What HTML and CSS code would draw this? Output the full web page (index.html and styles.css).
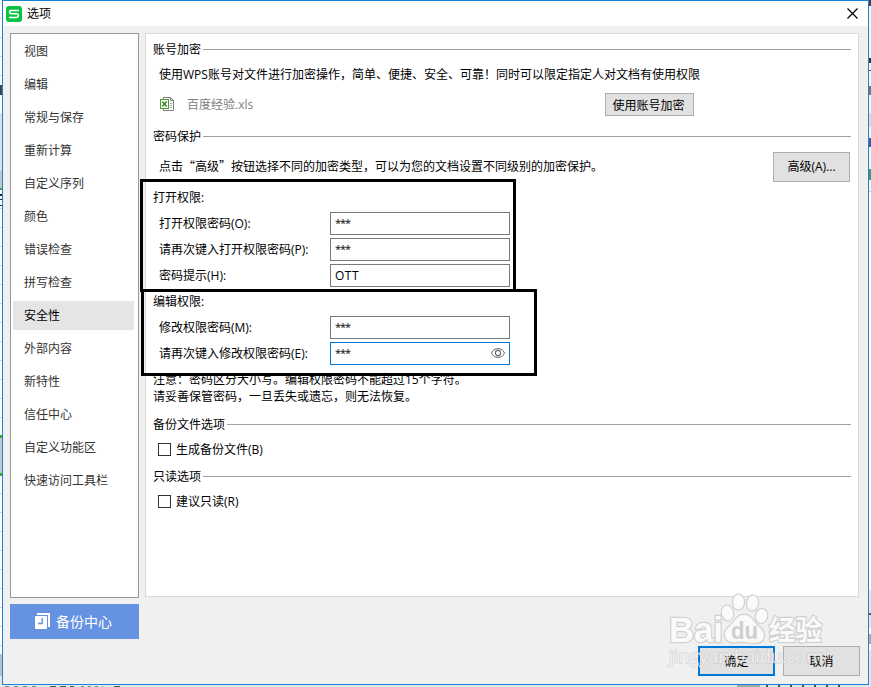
FILE: index.html
```
<!DOCTYPE html>
<html lang="zh-CN">
<head>
    <meta charset="UTF-8">
    <meta name="viewport" content="width=device-width, initial-scale=1.0">
    <title>选项</title>

    <link rel="stylesheet" href="styles.css">

</head>
<body>

    <!-- spreadsheet behind the dialog -->
    <div class="sheet-left"></div>
    <div class="sheet-right"></div>
    <div class="status-bar"></div>

    <div class="dialog">

        <div class="title-bar">
            <svg class="logo" width="16" height="16" viewBox="0 0 16 16">
                <rect width="16" height="16" rx="3" fill="#0cc243"/>
                <path d="M13 4.5H5.2Q3.5 4.5 3.5 6T5.2 7.7H10.8Q12.5 7.9 12.5 9.5T10.8 11.5H3" fill="none" stroke="#fff" stroke-width="1.5"/>
            </svg>
            <span class="title-text">选项</span>
            <svg class="close" width="11" height="11" viewBox="0 0 11 11">
                <path d="M.5 .5L10.5 10.5M10.5 .5L.5 10.5" stroke="#000" stroke-width="1.2"/>
            </svg>
        </div>

        <div class="main">

            <div class="left-col">
                <ul class="menu">
                    <li>视图</li>
                    <li>编辑</li>
                    <li>常规与保存</li>
                    <li>重新计算</li>
                    <li>自定义序列</li>
                    <li>颜色</li>
                    <li>错误检查</li>
                    <li>拼写检查</li>
                    <li class="active">安全性</li>
                    <li>外部内容</li>
                    <li>新特性</li>
                    <li>信任中心</li>
                    <li>自定义功能区</li>
                    <li>快速访问工具栏</li>
                </ul>
                <div class="backup">
                    <svg width="16" height="16" viewBox="0 0 16 16">
                        <path d="M2 0H15V14H13V2H2Z" fill="#fff"/>
                        <rect x="0" y="3" width="12" height="13" rx="1" fill="#fff"/>
                        <path d="M7.2 5V10.4H3" fill="none" stroke="#6593e1" stroke-width="1.5"/>
                    </svg>
                    <span>备份中心</span>
                </div>
            </div>

            <div class="panel">

                <div class="legend">账号加密</div>
                <div class="text-row">使用WPS账号对文件进行加密操作，简单、便捷、安全、可靠！同时可以限定指定人对文档有使用权限</div>
                <div class="file-row">
                    <svg width="15" height="15" viewBox="0 0 15 15">
                        <path d="M3.5 2V.5H10.5L13.5 3.5V13.5H3.5V12" fill="#fff" stroke="#808080"/>
                        <path d="M10.5 .5V3.5H13.5" fill="none" stroke="#808080"/>
                        <path d="M10 6.5H12M10 8.5H12M10 10.5H12" stroke="#aaa"/>
                        <rect x=".5" y="2.5" width="8" height="9" fill="#fff" stroke="#4e9a2f"/>
                        <path d="M2.3 4.5L6.7 9.5M6.7 4.5L2.3 9.5" stroke="#3f8a20" stroke-width="1.6"/>
                    </svg>
                    <span class="file-name">百度经验.xls</span>
                    <button class="btn btn-account">使用账号加密</button>
                </div>

                <div class="legend legend-tall">密码保护</div>
                <div class="advanced-row">
                    <span class="cjk-quotes">点击“高级”按钮选择不同的加密类型，可以为您的文档设置不同级别的加密保护。</span>
                    <button class="btn btn-large">高级(A)...</button>
                </div>

                <div class="group-title first-group">打开权限:</div>
                <div class="field"><label>打开权限密码(O):</label><div class="input stars">***</div></div>
                <div class="field"><label>请再次键入打开权限密码(P):</label><div class="input stars">***</div></div>
                <div class="field"><label>密码提示(H):</label><div class="input hint">OTT</div></div>

                <div class="group-title">编辑权限:</div>
                <div class="field"><label>修改权限密码(M):</label><div class="input stars">***</div></div>
                <div class="field">
                    <label>请再次键入修改权限密码(E):</label>
                    <div class="input stars focused">***
                        <svg class="eye" width="14" height="10" viewBox="0 0 14 10">
                            <path d="M.5 5Q2.5 .6 7 .6T13.5 5Q11.5 9.4 7 9.4T.5 5Z" fill="none" stroke="#666"/>
                            <circle cx="7" cy="5" r="2.6" fill="none" stroke="#666" stroke-width="1.1"/>
                        </svg>
                    </div>
                </div>

                <div class="note">注意：密码区分大小写。编辑权限密码不能超过15个字符。<br>请妥善保管密码，一旦丢失或遗忘，则无法恢复。</div>

                <div class="legend">备份文件选项</div>
                <div class="check"><span class="box"></span>生成备份文件(B)</div>
                <div class="legend">只读选项</div>
                <div class="check"><span class="box"></span>建议只读(R)</div>

            </div>

        </div>

        <div class="footer">
            <button class="btn btn-large btn-default">确定</button>
            <button class="btn btn-large">取消</button>
        </div>

    </div>

    <!-- annotation frames over the two password groups -->
    <div class="frame frame-open"></div>
    <div class="frame frame-edit"></div>

    <svg class="watermark" width="171" height="88" viewBox="0 0 171 88">
        <g class="mark">
            <text x="8" y="52" class="mark-latin" textLength="54" lengthAdjust="spacingAndGlyphs">Bai</text>
            <ellipse cx="66.5" cy="23" rx="5.5" ry="7.5" transform="rotate(-12 66.5 23)"/>
            <ellipse cx="77.5" cy="12" rx="5.5" ry="7.5"/>
            <ellipse cx="91.5" cy="13" rx="5.5" ry="7.5" transform="rotate(8 91.5 13)"/>
            <ellipse cx="100.5" cy="26" rx="5.5" ry="7" transform="rotate(12 100.5 26)"/>
            <path d="M83 25C91 25 92 32 98 37C106 43 104 53 94 53C88 53 83 51 77 52C65 55 60 44 67 38C74 32 75 25 83 25Z"/>
            <text x="108" y="50" class="mark-cjk" textLength="53" lengthAdjust="spacingAndGlyphs">经验</text>
        </g>
        <text x="70" y="49" class="mark-du" textLength="27" lengthAdjust="spacingAndGlyphs">du</text>
        <text x="8" y="73" class="mark-url" textLength="154" lengthAdjust="spacingAndGlyphs">jingyan.baidu.com</text>
    </svg>

</body>
</html>
```

FILE: styles.css
```
body{
    margin: 0;
    width: 871px;
    height: 687px;
    position: relative;
    overflow: hidden;
    background-color: #fff;
    font-family: "Open Sans", "Noto Sans CJK SC", sans-serif;
    font-size: 12px;
    color: #000;
}

/* background sheet */

.sheet-left{
    position: absolute;
    left: 0;
    top: 0;
    width: 2px;
    height: 687px;
    background:
        linear-gradient(transparent 0 85px, #444 85px 95px, transparent 95px 113px, #e1e1e1 113px 171px, #c6c6c6 171px 188px, #3fa63f 188px 190px, #fff 190px 194px, #222 194px 196px, #fff 196px 199px, #222 199px 200px, #fff 200px 205px, #222 205px 206px, transparent 206px 435px, #3fa63f 435px 438px, #c8c8c8 438px 473px, #3fa63f 473px 476px, transparent 476px 654px, #bfbfbf 654px 676px, #e6e6e6 676px),
        repeating-linear-gradient(#fff 0 18px, #d4d4d4 18px 19px);
}

.sheet-right{
    position: absolute;
    left: 869px;
    top: 0;
    width: 2px;
    height: 687px;
    background: linear-gradient(#3b4252 0 6px, #f5f6f7 6px 58px, #333 58px 63px, #fff 63px 70px, #555 70px 71px, #f5f6f7 71px 86px, #777 86px 95px, #f5f6f7 95px 113px, #ddd 113px 127px, #f5f6f7 127px 138px, #3f5f95 138px 147px, #f5f6f7 147px 169px, #3c9a72 169px 180px, #f5f6f7 180px 191px, #ccc 191px 192px, #fff 192px 590px, #e6e6e6 590px 613px, #555 613px 615px, #e6e6e6 615px 628px, #fff 628px 634px, #aaa 634px 644px, #fff 644px 650px, #e6e6e6 650px);
}

.status-bar{
    position: absolute;
    left: 0;
    top: 685px;
    width: 871px;
    height: 2px;
    background:
        repeating-linear-gradient(90deg, #888 0 4px, transparent 4px 9px) 5px 1px / 35px 1px no-repeat,
        repeating-linear-gradient(90deg, #555 0 6px, transparent 6px 10px) 50px 1px / 24px 1px no-repeat,
        repeating-linear-gradient(90deg, #888 0 3px, transparent 3px 7px) 81px 1px / 22px 1px no-repeat,
        linear-gradient(#555, #555) 114px 1px / 6px 1px no-repeat,
        linear-gradient(#a8a8a8, #a8a8a8) 737px 0 / 23px 2px no-repeat,
        repeating-linear-gradient(90deg, #555 0 2px, transparent 2px 12px) 766px 0 / 75px 2px no-repeat,
        #e6e6e6;
}

/* dialog */

.dialog{
    position: relative;
    box-sizing: border-box;
    width: 867px;
    height: 685px;
    margin-left: 2px;
    border: 1px solid #1883d7;
    background-color: #f0f0f0;
}

.title-bar{
    display: flex;
    align-items: center;
    height: 25px;
    padding: 0 10px 0 3px;
    background-color: #fff;
}

.title-text{
    margin-left: 5px;
    line-height: 23px;
}

.close{
    margin-left: auto;
}

.main{
    display: flex;
    align-items: flex-start;
    gap: 6px;
    padding: 7px 9px 0 7px;
}

.left-col{
    width: 129px;
}

.menu{
    box-sizing: border-box;
    height: 565px;
    margin: 0;
    padding: 3px 4px 0 2px;
    border: 1px solid #999;
    background-color: #fff;
    list-style: none;
    color: #333;
}

.menu li{
    height: 29px;
    margin-bottom: 4px;
    padding-left: 11px;
    line-height: 30px;
}

.menu .active{
    background-color: #e5e5e5;
    color: #000;
}

.backup{
    display: flex;
    align-items: center;
    box-sizing: border-box;
    gap: 5px;
    height: 35px;
    margin-top: 6px;
    padding: 0 0 2px 25px;
    background-color: #6593e1;
    color: #fff;
    font-size: 14px;
}

.panel{
    box-sizing: border-box;
    width: 714px;
    height: 564px;
    padding: 2px 7px 0;
    border: 1px solid #d9d9d9;
    background-color: #fff;
}

.legend{
    display: flex;
    align-items: center;
    height: 26px;
}

.legend:after{
    content: "";
    flex: 1;
    height: 1px;
    margin-left: 2px;
    background-color: #a0a0a0;
}

.legend-tall{
    height: 28px;
}

.text-row{
    height: 24px;
    padding-left: 6px;
    line-height: 26px;
    white-space: nowrap;
}

.file-row{
    display: flex;
    align-items: center;
    height: 36px;
    padding-left: 7px;
}

.file-name{
    margin-left: 12px;
    color: #808080;
}

.btn{
    box-sizing: border-box;
    padding: 0;
    border: 1px solid #adadad;
    background-color: #e1e1e1;
    font-family: inherit;
    font-size: 12px;
    color: #000;
}

.btn-account{
    width: 89px;
    height: 23px;
    margin: 1px 157px 0 auto;
    padding-right: 2px;
}

.btn-large{
    width: 77px;
    height: 30px;
}

.btn-default{
    border: 2px solid #0078d7;
}

.advanced-row{
    display: flex;
    align-items: flex-end;
    justify-content: space-between;
    height: 32px;
    padding: 0 1px 0 6px;
    line-height: 32px;
}

.advanced-row .btn{
    line-height: 26px;
}

.cjk-quotes{
    font-family: "Noto Sans CJK SC", sans-serif;
}

.group-title{
    height: 26px;
    line-height: 28px;
}

.first-group{
    margin-top: 2px;
}

.field{
    display: flex;
    align-items: flex-end;
    height: 26px;
    padding-left: 6px;
}

.field label{
    width: 171px;
    height: 26px;
    line-height: 28px;
    white-space: nowrap;
}

.input{
    display: flex;
    align-items: center;
    justify-content: space-between;
    box-sizing: border-box;
    width: 180px;
    height: 23px;
    margin-bottom: 1px;
    padding: 0 4px;
    border: 1px solid #7a7a7a;
    background-color: #fff;
}

.hint{
    letter-spacing: .5px;
}

.stars{
    padding-bottom: 2px;
    font-size: 11px;
    letter-spacing: -1px;
}

.focused{
    border-color: #0078d7;
}

.eye{
    margin-top: 1px;
}

.note{
    margin: 5px 0 6px;
    line-height: 17px;
}

.check{
    display: flex;
    align-items: center;
    box-sizing: border-box;
    height: 26px;
    padding: 0 0 2px 5px;
}

.box{
    box-sizing: border-box;
    width: 13px;
    height: 13px;
    margin-right: 5px;
    border: 1px solid #333;
}

.footer{
    display: flex;
    justify-content: flex-end;
    gap: 8px;
    padding: 7px 8px 0 0;
}

/* frames */

.frame{
    position: absolute;
    box-sizing: border-box;
    border: 3px solid #000;
}

.frame-open{
    left: 140px;
    top: 179px;
    width: 376px;
    height: 113px;
}

.frame-edit{
    left: 141px;
    top: 289px;
    width: 396px;
    height: 87px;
}

/* watermark */

.watermark{
    position: absolute;
    left: 661px;
    top: 590px;
}

.mark{
    fill: #fafafa;
    stroke: #d0d0d0;
    stroke-width: 2.4;
    paint-order: stroke;
}

.mark-latin{
    font: bold 35px "Liberation Sans", sans-serif;
}

.mark-cjk{
    font: bold 27px "Noto Sans CJK SC", sans-serif;
}

.mark-du{
    font: bold 24px "Liberation Sans", sans-serif;
    fill: #cfcfcf;
}

.mark-url{
    font: 19px "Open Sans", sans-serif;
    fill: #fff;
    fill-opacity: .65;
    stroke: #bbb;
    stroke-opacity: .5;
    stroke-width: 1.4;
    paint-order: stroke;
}
```
